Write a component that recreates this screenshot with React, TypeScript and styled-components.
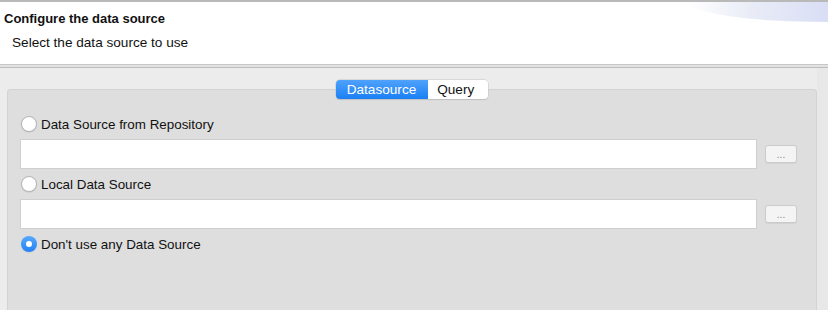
import React from "react";
import styled, { createGlobalStyle } from "styled-components";

const Global = createGlobalStyle`
  html, body { margin: 0; padding: 0; background: #ececec; }
  body { font-family: "Liberation Sans", Arial, sans-serif; width: 828px; height: 310px; overflow: hidden; }
`;

const Page = styled.div`
  width: 828px;
  height: 310px;
  display: flex;
  flex-direction: column;
  background: #ececec;
`;

const Header = styled.div`
  position: relative;
  height: 65px;
  border-top: 2px solid #b9b9b9;
  border-bottom: 1px solid #c8c8c8;
  background: #fff;
  overflow: hidden;
  box-sizing: border-box;
`;

const HeaderGlow = styled.div`
  position: absolute;
  right: 0;
  top: 0;
  width: 140px;
  height: 20px;
  background: linear-gradient(90deg, rgba(255,255,255,0) 0%, #e9ecf7 45%, #d9def5 100%);
  border-bottom-left-radius: 140px 20px;
`;

const Title = styled.div`
  font-weight: bold;
  font-size: 13px;
  color: #111;
  padding: 9px 0 0 4px;
  line-height: 15px;
`;

const Subtitle = styled.div`
  font-size: 13.6px;
  color: #111;
  padding: 9px 0 0 12px;
  line-height: 16px;
`;

const Sep = styled.div`
  height: 2px;
  background: #e2e2e2;
  border-bottom: 1px solid #bdbdbd;
`;

const Body = styled.div`
  flex: 1;
  display: flex;
  flex-direction: column;
  padding: 12px 11px 0 7px;
  position: relative;
`;

const Tabs = styled.div`
  align-self: center;
  display: flex;
  height: 19px;
  border-radius: 4px;
  box-shadow: 0 0 0 0.5px #c4c4c4, 0 1px 1px rgba(0,0,0,0.15);
  z-index: 1;
  margin-bottom: -10px;
`;

const Tab = styled.div<{ $active?: boolean }>`
  font-size: 13.6px;
  line-height: 19px;
  padding: 0 ${p => (p.$active ? "12px" : "14px")} 0 ${p => (p.$active ? "11px" : "9px")};
  color: ${p => (p.$active ? "#fff" : "#111")};
  background: ${p => (p.$active ? "linear-gradient(#4fa2fb, #1a7ff5)" : "#fff")};
  border-radius: ${p => (p.$active ? "4px 0 0 4px" : "0 4px 4px 0")};
`;

const Panel = styled.div`
  flex: 1;
  background: #dedede;
  border: 1px solid #d3d3d3;
  border-bottom: none;
  border-radius: 4px 4px 0 0;
  padding: 24px 19px 0 12px;
  display: flex;
  flex-direction: column;
`;

const RadioRow = styled.label`
  display: flex;
  align-items: center;
  gap: 4px;
  height: 20px;
  font-size: 13.4px;
  color: #111;
  margin-left: 1px;
`;

const Radio = styled.span<{ $checked?: boolean }>`
  width: 16px;
  height: 16px;
  box-sizing: border-box;
  border-radius: 50%;
  display: flex;
  align-items: center;
  justify-content: center;
  background: ${p => (p.$checked ? "linear-gradient(#58a9fb, #2182f5)" : "#fff")};
  border: ${p => (p.$checked ? "none" : "1px solid #b5b5b5")};
  box-shadow: 0 0.5px 1px rgba(0,0,0,0.12);
  &::after {
    content: "";
    display: ${p => (p.$checked ? "block" : "none")};
    width: 6px;
    height: 6px;
    border-radius: 50%;
    background: #fff;
  }
`;

const FieldRow = styled.div`
  display: flex;
  align-items: center;
  gap: 8px;
  margin: 5px 0 5px 0;
`;

const Field = styled.div`
  flex: 1;
  height: 30px;
  background: #fff;
  border: 1px solid #cfcfcf;
  box-sizing: border-box;
`;

const Browse = styled.div`
  width: 32px;
  height: 18px;
  background: #f4f4f4;
  border: 1px solid #cbcbcb;
  border-radius: 3px;
  box-sizing: border-box;
  font-size: 10px;
  color: #8a8a8a;
  display: flex;
  align-items: center;
  justify-content: center;
  line-height: 1;
  padding-top: 2px;
  box-shadow: 0 1px 0 rgba(0,0,0,0.05);
`;

const RightStrip = styled.div`
  position: absolute;
  right: 0;
  top: 0;
  bottom: 0;
  width: 11px;
  background: #e8e8e8;
`;

export default function App() {
  return (
    <Page>
      <Global />
      <Header>
        <HeaderGlow />
        <Title>Configure the data source</Title>
        <Subtitle>Select the data source to use</Subtitle>
      </Header>
      <Sep />
      <Body>
        <RightStrip />
        <Tabs>
          <Tab $active>Datasource</Tab>
          <Tab>Query</Tab>
        </Tabs>
        <Panel>
          <RadioRow>
            <Radio />
            Data Source from Repository
          </RadioRow>
          <FieldRow>
            <Field />
            <Browse>...</Browse>
          </FieldRow>
          <RadioRow>
            <Radio />
            Local Data Source
          </RadioRow>
          <FieldRow>
            <Field />
            <Browse>...</Browse>
          </FieldRow>
          <RadioRow>
            <Radio $checked />
            Don't use any Data Source
          </RadioRow>
        </Panel>
      </Body>
    </Page>
  );
}
